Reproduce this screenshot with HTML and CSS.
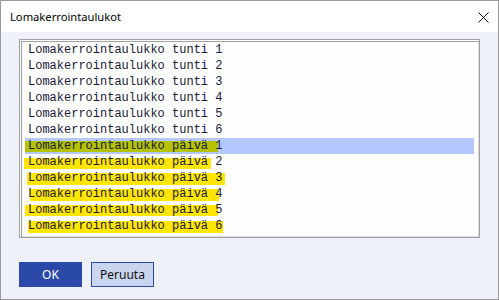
FILE: index.html
```html
<!DOCTYPE html>
<html lang="fi">
<head>
<meta charset="utf-8">
<title>Lomakerrointaulukot</title>
<link rel="stylesheet" href="styles.css">
</head>
<body>
<div class="window">
  <div class="titlebar">
    <span class="title">Lomakerrointaulukot</span>
    <svg class="close" width="11" height="11" viewBox="0 0 11 11" aria-label="Sulje">
      <path d="M0.5 0.5 L10.5 10.5 M10.5 0.5 L0.5 10.5" stroke="#111" stroke-width="1" fill="none"/>
    </svg>
  </div>
  <div class="content">
    <div class="listbox">
      <div class="row"><span class="txt">Lomakerrointaulukko tunti 1</span></div>
      <div class="row"><span class="txt">Lomakerrointaulukko tunti 2</span></div>
      <div class="row"><span class="txt">Lomakerrointaulukko tunti 3</span></div>
      <div class="row"><span class="txt">Lomakerrointaulukko tunti 4</span></div>
      <div class="row"><span class="txt">Lomakerrointaulukko tunti 5</span></div>
      <div class="row"><span class="txt">Lomakerrointaulukko tunti 6</span></div>
      <div class="row selected"><span class="mark olive" style="left:0;top:3px;width:193px;height:11px"></span><span class="txt">Lomakerrointaulukko päivä 1</span></div>
      <div class="row"><span class="mark" style="left:-1px;top:4px;width:187px;height:11px"></span><span class="txt">Lomakerrointaulukko päivä 2</span></div>
      <div class="row"><span class="mark" style="left:2px;top:3px;width:198px;height:12px"></span><span class="txt">Lomakerrointaulukko päivä 3</span></div>
      <div class="row"><span class="mark" style="left:5px;top:3px;width:189px;height:12px"></span><span class="txt">Lomakerrointaulukko päivä 4</span></div>
      <div class="row"><span class="mark" style="left:0;top:3px;width:193px;height:11px"></span><span class="txt">Lomakerrointaulukko päivä 5</span></div>
      <div class="row"><span class="mark" style="left:3px;top:3px;width:195px;height:12px"></span><span class="txt">Lomakerrointaulukko päivä 6</span></div>
    </div>
    <div class="buttons">
      <button class="btn primary">OK</button>
      <button class="btn secondary">Peruuta</button>
    </div>
  </div>
</div>
</body>
</html>
```

FILE: styles.css
```css
html, body {
  margin: 0;
  padding: 0;
  background: #ffffff;
}

.window {
  width: 499px;
  height: 300px;
  box-sizing: border-box;
  border: 1px solid #9a9a9a;
  display: flex;
  flex-direction: column;
  font-family: "Noto Sans", "Open Sans", sans-serif;
}

.titlebar {
  height: 31px;
  flex: none;
  background: #ffffff;
  display: flex;
  align-items: center;
  justify-content: space-between;
  padding: 0 9px 0 9px;
}

.title {
  font-size: 11.2px;
  color: #000;
}

.close {
  display: block;
  margin-top: 1px;
}

.content {
  flex: 1;
  background: #eef1f9;
  padding: 7px 0 0 18px;
  display: flex;
  flex-direction: column;
}

.listbox {
  width: 461px;
  height: 199px;
  box-sizing: border-box;
  background: #fefefe;
  border: 1px solid #a0a0a0;
  box-shadow: inset 1px 1px 0 #ffffff, inset 2px 2px 0 #a3a3a3, inset -1px -1px 0 #dcdcdc;
  padding: 2px 5px 3px 5px;
  display: flex;
  flex-direction: column;
}

.row {
  position: relative;
  height: 16px;
  line-height: 16px;
  padding-left: 3px;
  font-family: "Liberation Mono", "Courier New", monospace;
  font-size: 12px;
  color: #1a1a38;
  white-space: pre;
}

.row.selected {
  background: #b4c8fe;
}

.mark {
  position: absolute;
  background: #ffe600;
}

.mark.olive {
  background: #b4c200;
}

.txt {
  position: relative;
}

.buttons {
  display: flex;
  gap: 9px;
  margin-top: 24px;
}

.btn {
  width: 63px;
  height: 25px;
  box-sizing: border-box;
  font-family: "Noto Sans", "Open Sans", sans-serif;
  font-size: 12px;
  padding: 0;
  margin: 0;
}

.btn.primary {
  background: #2b49a8;
  border: 1px solid #2b49a8;
  color: #ffffff;
}

.btn.secondary {
  background: #c9d4ee;
  border: 1px solid #2d4aa4;
  color: #111;
}
```
